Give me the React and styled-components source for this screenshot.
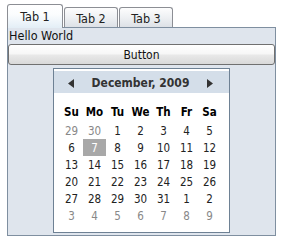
import React from 'react'
import styled, {createGlobalStyle} from 'styled-components'

const GlobalStyle = createGlobalStyle `
  body {
    margin: 0;
    background: #fff;
    font-family: "DejaVu Sans Condensed", "Liberation Sans", sans-serif;
    font-stretch: condensed;
  }
`

const Page = styled.div `
  padding: 4px 0 0 7px;
  width: 269px;
`

const TabStrip = styled.div `
  display: flex;
  align-items: flex-end;
  height: 23px;
  position: relative;
  z-index: 1;
`

const Tab = styled.div `
  box-sizing: border-box;
  width: ${p => p.selected ? 56 : 54}px;
  height: ${p => p.selected ? 24 : 20}px;
  margin-bottom: ${p => p.selected ? -1 : 0}px;
  margin-left: ${p => p.first ? 0 : 1}px;
  border: 1px solid #8c8e94;
  border-bottom: 0;
  border-radius: 3px 3px 0 0;
  background: ${p => p.selected
    ? 'linear-gradient(#ffffff, #fbfdfe 40%, #e3eef6)'
    : 'linear-gradient(#fdfdfd, #eef0f3 50%, #dde1e6)'};
  display: flex;
  align-items: center;
  justify-content: center;
  padding-top: ${p => p.selected ? 0 : 1}px;
  font-size: 12.5px;
  color: #222;
`

const Panel = styled.div `
  box-sizing: border-box;
  height: 209px;
  border: 1px solid #7f8fa0;
  background: #dfe5ed;
  display: flex;
  flex-direction: column;
`

const Label = styled.div `
  font-size: 12.5px;
  line-height: 15px;
  color: #111;
  padding-left: 1px;
`

const Button = styled.div `
  box-sizing: border-box;
  margin-top: 1px;
  height: 21px;
  border: 1px solid #707070;
  border-radius: 3px;
  background: linear-gradient(#ffffff, #f7f7f7 45%, #e8e8e8 55%, #d9d9d9);
  display: flex;
  align-items: center;
  justify-content: center;
  font-size: 12px;
  color: #111;
`

const Calendar = styled.div `
  box-sizing: border-box;
  align-self: center;
  margin-top: 3px;
  width: 177px;
  height: 165px;
  border: 1px solid #6e8194;
  background: #fff;
  padding-top: 2px;
`

const Header = styled.div `
  height: 22px;
  background: #d4dee9;
  display: flex;
  align-items: center;
  justify-content: space-between;
  padding: 0 16px 0 14px;
`

const Arrow = styled.svg `
  width: 6px;
  height: 9px;
  fill: #333;
  margin-top: 3px;
`

const Month = styled.div `
  font-size: 12px;
  font-weight: bold;
  color: #333;
  margin-top: 2px;
`

const Grid = styled.div `
  display: grid;
  grid-template-columns: repeat(7, 23px);
  grid-template-rows: 20px repeat(6, 17px);
  margin: 9px 0 0 6px;
`

const DayName = styled.div `
  display: flex;
  align-items: center;
  justify-content: center;
  font-size: 11.5px;
  font-weight: bold;
  color: #000;
`

const Day = styled.div `
  display: flex;
  align-items: center;
  justify-content: center;
  font-size: 11.5px;
  color: ${p => p.selected ? '#fff' : p.other ? '#888' : '#222'};
  background: ${p => p.selected ? '#a8a8a8' : 'transparent'};
`

const dayNames = ['Su', 'Mo', 'Tu', 'We', 'Th', 'Fr', 'Sa']

const days = [
  29, 30, 1, 2, 3, 4, 5,
  6, 7, 8, 9, 10, 11, 12,
  13, 14, 15, 16, 17, 18, 19,
  20, 21, 22, 23, 24, 25, 26,
  27, 28, 29, 30, 31, 1, 2,
  3, 4, 5, 6, 7, 8, 9
]

const App = () => (
  <Page>
    <GlobalStyle/>
    <TabStrip>
      <Tab first selected>Tab 1</Tab>
      <Tab>Tab 2</Tab>
      <Tab>Tab 3</Tab>
    </TabStrip>
    <Panel>
      <Label>Hello World</Label>
      <Button>Button</Button>
      <Calendar>
        <Header>
          <Arrow viewBox="0 0 6 9"><path d="M6 0 L0 4.5 L6 9 Z"/></Arrow>
          <Month>December, 2009</Month>
          <Arrow viewBox="0 0 6 9"><path d="M0 0 L6 4.5 L0 9 Z"/></Arrow>
        </Header>
        <Grid>
          {dayNames.map(d => <DayName key={d}>{d}</DayName>)}
          {days.map((d, i) => <Day key={i}
            other={i < 2 || i > 34}
            selected={i === 8}>{d}</Day>)}
        </Grid>
      </Calendar>
    </Panel>
  </Page>
)

export default App
